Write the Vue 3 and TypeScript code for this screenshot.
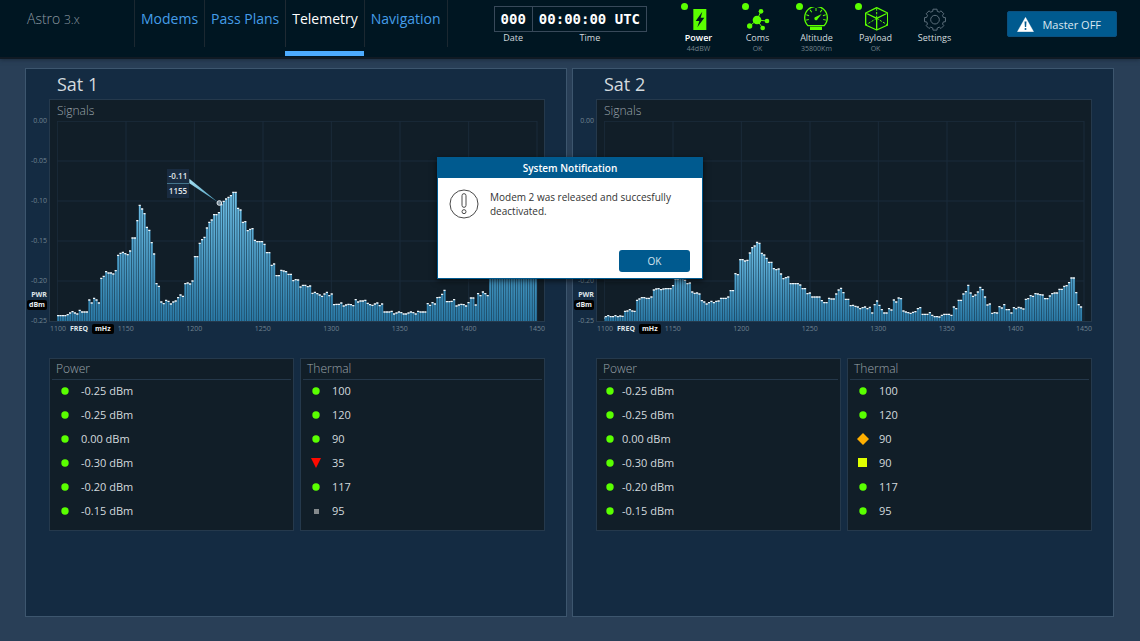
<script setup lang="ts">
import { ref } from 'vue'

type Status = 'normal' | 'critical' | 'serious' | 'caution' | 'off'
interface Reading { value: string; status: Status }
interface Readout { title: string; compact?: boolean; rows: Reading[] }
interface Satellite { name: string; shift: number; levels: number[]; marker: boolean; readouts: Readout[] }

const PITCH = 7.2
const FLOOR = 600

const tabs = ['Modems', 'Pass Plans', 'Telemetry', 'Navigation']
const activeTab = ref('Telemetry')
const noticeOpen = ref(true)

const monitors = [
  { name: 'Power', detail: '44dBW', strong: true, live: true },
  { name: 'Coms', detail: 'OK', strong: false, live: true },
  { name: 'Altitude', detail: '35800Km', strong: false, live: true },
  { name: 'Payload', detail: 'OK', strong: false, live: true },
  { name: 'Settings', detail: '', strong: false, live: false },
]

const gridColumns = [0, 1, 2, 3, 4, 5, 6, 7].map((n) => Math.round(n * 205.6))
const gridRows = [1, 120, 240, 360, 480]
const gaugeTicks = [-100, -70, -35, 0, 35, 70, 100]

const levelsOne = [
  15, 15, 15, 15, 18, 23, 27, 23, 20, 31,
  26, 26, 26, 62, 53, 67, 62, 53, 127, 133,
  147, 143, 143, 140, 150, 196, 202, 205, 201, 198,
  209, 248, 248, 300, 346, 335, 321, 280, 271, 234,
  200, 111, 103, 56, 51, 61, 58, 50, 56, 59,
  69, 77, 73, 111, 113, 110, 119, 192, 192, 232,
  243, 250, 278, 295, 302, 318, 318, 324, 348, 358,
  365, 370, 375, 385, 385, 337, 332, 295, 297, 270,
  274, 276, 241, 237, 237, 237, 229, 204, 204, 166,
  170, 135, 135, 151, 149, 147, 139, 139, 120, 123,
  122, 101, 106, 106, 102, 104, 82, 85, 81, 77,
  73, 80, 85, 75, 80, 48, 49, 49, 53, 44,
  47, 49, 48, 45, 63, 56, 59, 59, 61, 52,
  48, 46, 50, 53, 45, 50, 26, 26, 26, 28,
  20, 23, 26, 24, 20, 20, 23, 26, 24, 20,
  28, 26, 26, 26, 51, 46, 54, 50, 69, 70,
  79, 91, 57, 57, 58, 63, 44, 47, 49, 48,
  44, 54, 68, 68, 47, 81, 75, 86, 81, 75,
  180, 190, 205, 220, 240, 250, 262, 270, 280, 286,
  290, 284, 275, 268, 255, 240, 232, 220, 205, 190,
]

const levelsTwo = [
  8, 12, 15, 12, 12, 15, 12, 14, 13, 28,
  29, 33, 29, 28, 61, 65, 69, 69, 67, 67,
  71, 92, 95, 96, 93, 95, 96, 96, 96, 105,
  125, 125, 127, 127, 121, 111, 113, 86, 82, 83,
  80, 60, 56, 50, 54, 58, 54, 58, 59, 67,
  67, 67, 71, 90, 90, 141, 138, 183, 183, 179,
  181, 203, 219, 224, 235, 232, 202, 197, 187, 175,
  175, 156, 153, 155, 140, 126, 129, 131, 111, 111,
  111, 111, 107, 96, 96, 81, 83, 71, 71, 71,
  71, 60, 54, 54, 67, 65, 65, 80, 92, 97,
  84, 64, 64, 45, 46, 43, 41, 36, 39, 41,
  36, 40, 23, 48, 59, 46, 33, 23, 23, 36,
  32, 62, 56, 68, 66, 29, 26, 24, 22, 25,
  27, 36, 39, 19, 19, 19, 24, 16, 12, 12,
  11, 16, 19, 19, 19, 16, 41, 36, 61, 61,
  80, 87, 106, 83, 73, 77, 86, 100, 93, 71,
  47, 50, 22, 24, 23, 42, 38, 48, 33, 33,
  23, 39, 36, 40, 38, 35, 64, 66, 75, 73,
  81, 80, 78, 77, 66, 66, 74, 81, 83, 83,
  94, 94, 103, 105, 114, 128, 128, 84, 48, 41,
]

const rows = (values: string[], special: Record<number, Status> = {}): Reading[] =>
  values.map((value, i) => ({ value, status: special[i] ?? 'normal' }))

const powerValues = ['-0.25 dBm', '-0.25 dBm', '0.00 dBm', '-0.30 dBm', '-0.20 dBm', '-0.15 dBm']

const satellites: Satellite[] = [
  {
    name: 'Sat 1',
    shift: 0,
    levels: levelsOne,
    marker: true,
    readouts: [
      { title: 'Power', rows: rows(powerValues) },
      { title: 'Thermal', rows: rows(['100', '120', '90', '35', '117', '95'], { 3: 'critical', 5: 'off' }) },
    ],
  },
  {
    name: 'Sat 2',
    shift: -5,
    levels: levelsTwo,
    marker: false,
    readouts: [
      { title: 'Power', compact: true, rows: rows(powerValues) },
      { title: 'Thermal', rows: rows(['100', '120', '90', '90', '117', '95'], { 2: 'serious', 3: 'caution' }) },
    ],
  },
]

const yLabels = ['0.00', '-0.05', '-0.10', '-0.15']
const xLabels = ['1200', '1250', '1300', '1350', '1400', '1450']

const barsPath = (levels: number[]): string =>
  levels.map((h, i) => `M${(i * PITCH + 1).toFixed(1)} ${FLOOR}v${-h}h5.2v${h}z`).join('')
const capsPath = (levels: number[]): string =>
  levels.map((h, i) => `M${(i * PITCH).toFixed(1)} ${FLOOR - h - 1}h6.6`).join('')

const gearPath = (): string => {
  const parts: string[] = []
  const teeth = 8
  const profile: [number, number][] = [[-15, 26], [-11, 32], [11, 32], [15, 26]]
  for (let t = 0; t < teeth; t++) {
    for (const [offset, radius] of profile) {
      const a = ((t * 360) / teeth + offset) * (Math.PI / 180)
      parts.push(`${(33 + radius * Math.sin(a)).toFixed(1)} ${(33 - radius * Math.cos(a)).toFixed(1)}`)
    }
  }
  return `M${parts.join('L')}Z`
}
</script>

<template>
  <div class="app">
    <header class="top">
      <div class="brand">Astro <small>3.x</small></div>
      <nav class="tabs" aria-label="Main">
        <a
          v-for="tab in tabs"
          :key="tab"
          href="#"
          class="tab"
          :class="{ active: tab === activeTab }"
          @click.prevent="activeTab = tab"
        ><span>{{ tab }}</span></a>
      </nav>

      <div class="clock">
        <div class="clock-part">
          <span class="digits">000</span>
          <span class="caption">Date</span>
        </div>
        <div class="clock-part">
          <span class="digits">00:00:00 UTC</span>
          <span class="caption">Time</span>
        </div>
      </div>

      <div class="monitors">
        <button v-for="m in monitors" :key="m.name" type="button" class="monitor">
          <span class="monitor-core">
            <i v-if="m.live" class="live"></i>
            <svg v-if="m.name === 'Power'" class="glyph green" viewBox="0 0 72 72" aria-hidden="true">
              <rect x="19" y="6" width="39" height="63" fill="currentColor" />
              <path d="M46 14L26 42H37L31 61L52 32H41Z" fill="#001622" />
            </svg>
            <svg v-else-if="m.name === 'Coms'" class="glyph green" viewBox="0 0 72 72" aria-hidden="true">
              <path d="M33 39L45 12M33 39L63 42M33 39L50 63M33 39L11 57" stroke="currentColor" stroke-width="3" />
              <g fill="currentColor">
                <circle cx="33" cy="39" r="13" />
                <circle cx="45" cy="13" r="7" />
                <circle cx="63" cy="42" r="7" />
                <circle cx="50" cy="63" r="7" />
                <circle cx="11" cy="57" r="8" />
              </g>
            </svg>
            <svg v-else-if="m.name === 'Altitude'" class="glyph green" viewBox="0 0 72 72" aria-hidden="true">
              <path d="M12 56H60A34 34 0 1 0 12 56Z" fill="none" stroke="currentColor" stroke-width="4" />
              <g stroke="currentColor" stroke-width="3">
                <path v-for="t in gaugeTicks" :key="t" d="M36 3V12" :transform="`rotate(${t} 36 34)`" />
              </g>
              <path d="M53 21L33 31A5 5 0 1 0 41 36Z" fill="currentColor" />
              <rect x="18" y="59" width="36" height="10" fill="currentColor" />
            </svg>
            <svg v-else-if="m.name === 'Payload'" class="glyph green" viewBox="0 0 72 72" aria-hidden="true">
              <path d="M38 2L71 18V54L38 69L5 54V18ZM5 18L38 34L71 18M38 34V69" fill="none" stroke="currentColor" stroke-width="4" stroke-linejoin="round" />
              <path d="M38 4V34M38 34L5 54M38 34L71 54" fill="none" stroke="currentColor" stroke-width="3" stroke-dasharray="7 4" />
            </svg>
            <svg v-else class="glyph grey" viewBox="-3 -5 72 72" aria-hidden="true">
              <path :d="gearPath()" fill="none" stroke="currentColor" stroke-width="3" stroke-linejoin="round" />
              <circle cx="33" cy="33" r="13" fill="none" stroke="currentColor" stroke-width="3" />
            </svg>
            <span class="monitor-name" :class="{ strong: m.strong }">{{ m.name }}</span>
          </span>
          <span v-if="m.detail" class="monitor-detail">{{ m.detail }}</span>
        </button>
      </div>

      <button type="button" class="master">
        <svg viewBox="0 0 52 46" aria-hidden="true">
          <path d="M26 1L51 45H1Z" fill="#fff" stroke="#fff" stroke-linejoin="round" />
          <path d="M23 14H29L28 31H24Z" fill="#005a8f" />
          <circle cx="26" cy="37" r="3" fill="#005a8f" />
        </svg>
        <span>Master OFF</span>
      </button>
    </header>

    <main class="board">
      <section v-for="sat in satellites" :key="sat.name" class="panel">
        <h2>{{ sat.name }}</h2>
        <div class="plot">
          <div class="y-axis">
            <div v-for="y in yLabels" :key="y" class="y-step">{{ y }}</div>
            <div class="y-step">
              -0.20
              <div class="unit-name">PWR</div>
              <div class="unit">dBm</div>
            </div>
            <div>-0.25</div>
          </div>
          <div class="chart">
            <h3>Signals</h3>
            <div class="canvas">
              <svg viewBox="0 0 1461 600" preserveAspectRatio="none" role="img" :aria-label="`${sat.name} signals`">
                <defs>
                  <linearGradient :id="`fill-${sat.marker}`" gradientUnits="userSpaceOnUse" x1="0" :y1="sat.marker ? 215 : 365" x2="0" y2="600">
                    <stop offset="0" stop-color="#70c0e6" />
                    <stop offset="1" stop-color="#2a7ba8" />
                  </linearGradient>
                  <linearGradient v-if="sat.marker" id="pointer" x1="0" y1="0" x2="1" y2="1">
                    <stop offset="0" stop-color="#a5e0f2" />
                    <stop offset="1" stop-color="#4b9cbd" />
                  </linearGradient>
                </defs>
                <g stroke="#1b2b3a" stroke-width="3">
                  <path v-for="x in gridColumns" :key="`c${x}`" :d="`M${x + 1} 0V600`" />
                  <path v-for="y in gridRows" :key="`r${y}`" :d="`M0 ${y}H1440`" />
                </g>
                <g :transform="`translate(${sat.shift} 0)`">
                  <rect
                    v-for="(h, i) in sat.levels"
                    :key="i"
                    :x="i * PITCH"
                    :y="FLOOR - h"
                    :width="PITCH"
                    :height="h"
                    fill="#1c445e"
                  />
                  <path :d="barsPath(sat.levels)" :fill="`url(#fill-${sat.marker})`" />
                  <path :d="capsPath(sat.levels)" stroke="#eef6fa" stroke-width="4" />
                </g>
                <g v-if="sat.marker">
                  <path d="M397 173V187L483 244Z" fill="url(#pointer)" />
                  <circle cx="487" cy="246" r="7" fill="#7d8f9c" stroke="#dfe7ec" stroke-width="3" />
                </g>
              </svg>
              <div v-if="sat.marker" class="callout">
                <span>-0.11</span>
                <span>1155</span>
              </div>
            </div>
          </div>
          <div class="x-axis">
            <div class="x-lead">
              <span>1100</span>
              <span class="unit-name">FREQ</span>
              <span class="unit">mHz</span>
              <span>1150</span>
            </div>
            <span v-for="x in xLabels" :key="x">{{ x }}</span>
          </div>
        </div>
        <div class="readouts">
          <section v-for="r in sat.readouts" :key="r.title" class="readout" :class="{ compact: r.compact }">
            <h3>{{ r.title }}</h3>
            <ul>
              <li v-for="(row, i) in r.rows" :key="i">
                <svg viewBox="0 0 12 12" aria-hidden="true">
                  <path v-if="row.status === 'critical'" d="M1 1H11L6 11Z" fill="#ff0a00" />
                  <path v-else-if="row.status === 'serious'" d="M6 0L12 6L6 12L0 6Z" fill="#ffaf00" />
                  <rect v-else-if="row.status === 'caution'" x="1" y="1" width="9" height="9" fill="#dfff00" />
                  <rect v-else-if="row.status === 'off'" x="4" y="4" width="5" height="5" fill="#84898c" />
                  <circle v-else cx="6" cy="6" r="3.7" fill="#5aff00" />
                </svg>
                <span>{{ row.value }}</span>
              </li>
            </ul>
          </section>
        </div>
      </section>
    </main>

    <div v-if="noticeOpen" class="dialog" role="dialog" aria-labelledby="notice-title">
      <h2 id="notice-title">System Notification</h2>
      <div class="dialog-body">
        <svg viewBox="0 0 90 90" fill="none" stroke="#4a4a4a" stroke-width="3" aria-hidden="true">
          <circle cx="45" cy="45" r="42" />
          <rect x="39" y="14" width="12" height="41" rx="6" />
          <circle cx="45" cy="68" r="6" />
        </svg>
        <p>Modem 2 was released and succesfully deactivated.</p>
      </div>
      <div class="dialog-actions">
        <button type="button" @click="noticeOpen = false">OK</button>
      </div>
    </div>
  </div>
</template>

<style>
body {
  margin: 0;
  background: #283f58;
}
</style>

<style scoped>
.app {
  position: relative;
  display: flex;
  flex-direction: column;
  min-height: 100vh;
  background: #293f57;
  color: #d3dade;
  font-family: 'Open Sans', 'Noto Sans', sans-serif;
}
*,
*::before {
  box-sizing: border-box;
}
h2,
h3,
p,
ul {
  margin: 0;
  padding: 0;
  font-weight: 400;
  list-style: none;
}
button {
  padding: 0;
  border: 0;
  background: none;
  color: inherit;
  font-family: inherit;
  cursor: pointer;
}

.top {
  display: flex;
  align-items: flex-start;
  height: 59px;
  background: #001622;
  border-bottom: 2px solid #101a24;
  box-shadow: 0 1px 4px #1b2c3e;
}
.brand {
  width: 134px;
  padding-left: 27px;
  color: #8e9aa2;
  font-size: 14px;
  font-weight: 300;
  line-height: 38px;
}
.brand small {
  font-size: 12px;
}
.tabs {
  display: flex;
  height: 56px;
}
.tab {
  display: flex;
  border-bottom: 5px solid transparent;
  color: #4dacff;
  font-size: 14px;
  line-height: 38px;
  text-decoration: none;
  opacity: 0.9;
}
.tab span {
  height: 47px;
  padding: 0 6px;
  border-left: 1px solid #1f2a33;
}
.tab:last-child span {
  border-right: 1px solid #1f2a33;
}
.tab.active {
  border-bottom-color: #4dacff;
  color: #fff;
  opacity: 1;
}
.clock {
  display: flex;
  margin: 6px 0 0 46px;
}
.clock-part {
  display: flex;
  flex-direction: column;
  align-items: center;
}
.digits {
  height: 26px;
  padding: 0 6px;
  border: 1px solid #38495a;
  color: #fff;
  font: 700 14px/24px 'DejaVu Sans Mono', 'Liberation Mono', monospace;
}
.clock-part + .clock-part .digits {
  border-left: 0;
}
.caption {
  font-size: 9px;
  line-height: 12px;
}
.monitors {
  display: flex;
  margin-left: 22px;
}
.monitor {
  display: flex;
  flex-direction: column;
  align-items: center;
  width: 59px;
  padding-top: 7px;
}
.monitor-core {
  position: relative;
  display: flex;
  flex-direction: column;
  align-items: center;
}
.live {
  position: absolute;
  top: -4px;
  left: -4px;
  width: 7px;
  height: 7px;
  border-radius: 50%;
  background: #5aff00;
}
.glyph {
  width: 24px;
  height: 24px;
}
.green {
  color: #5aff00;
}
.grey {
  color: #5c6e7b;
}
.monitor-name {
  font-size: 9px;
  line-height: 13px;
}
.monitor-name.strong {
  color: #fff;
  font-weight: 600;
}
.monitor-detail {
  color: #75838c;
  font-size: 7px;
  line-height: 9px;
}
.master {
  display: flex;
  align-items: center;
  gap: 8px;
  height: 26px;
  margin: 11px 23px 0 auto;
  padding: 0 15px 0 9px;
  border: 1px solid #0a5080;
  border-radius: 2px;
  background: #005a8f;
  color: #dbe8f1;
  font-size: 11px;
}
.master svg {
  width: 17px;
  height: 15px;
}

.board {
  display: grid;
  flex: 1;
  grid-template-columns: 1fr 1fr;
  gap: 5px;
  padding: 9px 26px 24px 25px;
}
.panel {
  padding: 0 21px 12px 1px;
  border: 1px solid #3d566e;
  background: #142b42;
}
.panel > h2 {
  padding-left: 30px;
  font-size: 18px;
  line-height: 30px;
}
.plot {
  display: grid;
  grid-template-rows: auto auto;
  grid-template-columns: 22px 1fr;
}
.y-axis {
  grid-row: 1 / span 2;
  padding: 17px 2px 0 0;
  color: #708290;
  font-size: 7px;
  line-height: 10px;
  text-align: right;
}
.y-step {
  display: flex;
  flex-direction: column;
  align-items: flex-end;
  height: 40px;
}
.unit-name {
  color: #dfe5e9;
  font-weight: 700;
}
.y-axis .unit-name {
  margin-top: 4px;
}
.unit {
  padding: 0 2px;
  border-radius: 2px;
  background: #000;
  color: #e8ecef;
  font-weight: 700;
}
.chart {
  padding-left: 7px;
  border: 1px solid #25394c;
  background: #111e28;
}
.chart h3 {
  color: #9ca5ab;
  font-size: 12px;
  font-weight: 300;
  line-height: 21px;
}
.canvas {
  position: relative;
}
.canvas svg {
  display: block;
  width: 100%;
  height: 200px;
}
.callout {
  position: absolute;
  top: 48px;
  left: 110px;
  display: flex;
  flex-direction: column;
  width: 22px;
  background: #192b40;
  color: #e3e8eb;
  font-size: 8px;
  font-weight: 600;
  line-height: 14px;
  text-align: center;
}
.callout span + span {
  border-top: 1px solid #44758c;
}
.x-axis {
  display: flex;
  grid-column: 2;
  justify-content: space-between;
  padding: 2px 0 0 1px;
  color: #708290;
  font-size: 7px;
  line-height: 10px;
}
.x-lead {
  display: flex;
  gap: 4px;
}
.x-lead .unit {
  padding: 0 3px;
}
.readouts {
  display: grid;
  grid-template-columns: 1fr 1fr;
  gap: 6px;
  margin: 24px 0 0 22px;
}
.readout {
  padding: 0 2px 6px;
  border: 1px solid #25394c;
  background: #111e28;
}
.readout h3 {
  padding-left: 4px;
  border-bottom: 1px solid #25384a;
  color: #9ca5ab;
  font-size: 12px;
  font-weight: 300;
  line-height: 20px;
}
.readout li {
  display: flex;
  align-items: center;
  gap: 10px;
  height: 24px;
  padding: 0 0 3px 7px;
  font-size: 11px;
}
.readout.compact li {
  gap: 6px;
  padding-left: 5px;
}
.readout svg {
  width: 12px;
  height: 12px;
}

.dialog {
  position: absolute;
  top: 157px;
  left: 50%;
  width: 266px;
  border: 1px solid #005a8f;
  background: #fff;
  box-shadow: 0 2px 6px #000000a0;
  color: #333;
  transform: translateX(-50%);
}
.dialog h2 {
  background: #005a8f;
  color: #fff;
  font-size: 10px;
  font-weight: 600;
  line-height: 20px;
  text-align: center;
}
.dialog-body {
  display: flex;
  align-items: center;
  gap: 11px;
  padding: 11px 28px 0 11px;
}
.dialog-body svg {
  flex: none;
  width: 30px;
  height: 30px;
}
.dialog-body p {
  font-size: 10px;
  line-height: 14px;
}
.dialog-actions {
  display: flex;
  justify-content: flex-end;
  padding: 31px 12px 6px;
}
.dialog button {
  width: 71px;
  height: 22px;
  border-radius: 3px;
  background: #005a8f;
  color: #d5e4ee;
  font-size: 10px;
}
</style>
